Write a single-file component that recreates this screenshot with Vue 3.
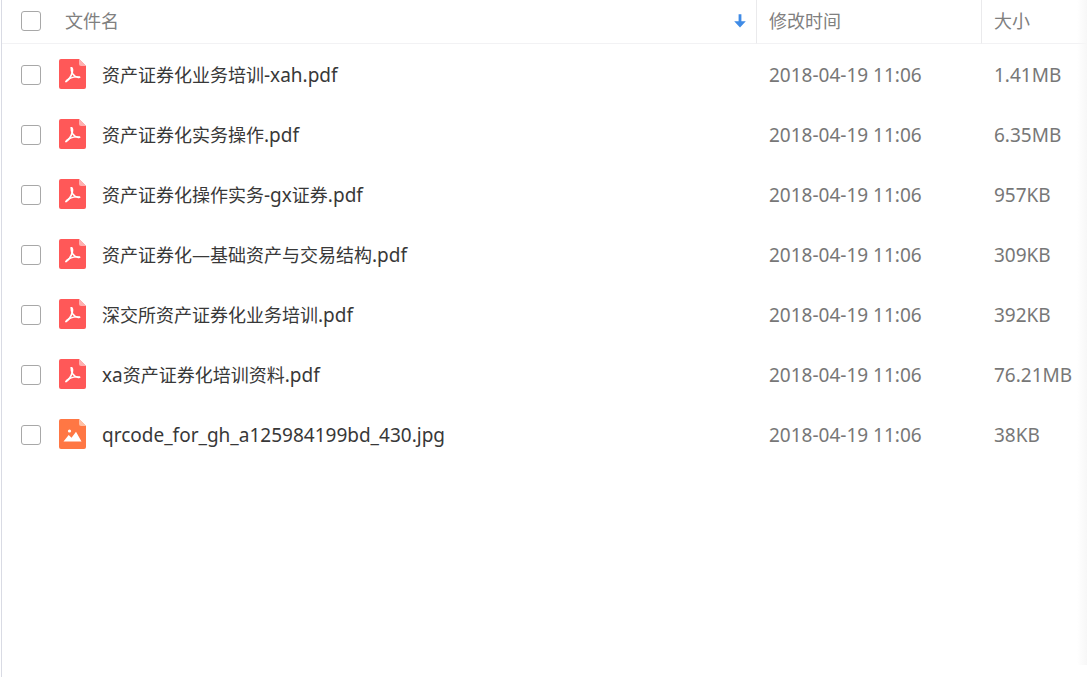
<script setup>
import { ref } from 'vue'

const modified = '2018-04-19 11:06'
const files = ref([
  { name: '资产证券化业务培训-xah.pdf', size: '1.41MB', type: 'pdf', checked: false },
  { name: '资产证券化实务操作.pdf', size: '6.35MB', type: 'pdf', checked: false },
  { name: '资产证券化操作实务-gx证券.pdf', size: '957KB', type: 'pdf', checked: false },
  { name: '资产证券化—基础资产与交易结构.pdf', size: '309KB', type: 'pdf', checked: false },
  { name: '深交所资产证券化业务培训.pdf', size: '392KB', type: 'pdf', checked: false },
  { name: 'xa资产证券化培训资料.pdf', size: '76.21MB', type: 'pdf', checked: false },
  { name: 'qrcode_for_gh_a125984199bd_430.jpg', size: '38KB', type: 'image', checked: false },
])

function toggleAll(event) {
  files.value.forEach((file) => { file.checked = event.target.checked })
}

// Splits a name into Latin and Chinese runs, which are set at different sizes.
function runs(name) {
  return name.match(/[\x20-\x7e]+|[^\x20-\x7e]+/g).map((text) => ({
    text,
    latin: /^[\x20-\x7e]/.test(text),
  }))
}
</script>

<template>
  <main class="panel">
    <table class="files">
      <colgroup>
        <col>
        <col class="col-time">
        <col class="col-size">
      </colgroup>
      <thead>
        <tr>
          <th scope="col">
            <div class="head-name">
              <input id="all" class="box" type="checkbox" aria-label="全选" @change="toggleAll">
              <span class="head-label">文件名</span>
              <svg class="arrow" width="12" height="14" viewBox="0 0 12 14" aria-hidden="true">
                <path d="M4.6 0.3h2.8v6.9H11.8L6 13.6 0.2 7.2H4.6z" fill="#3f8be6" />
              </svg>
            </div>
          </th>
          <th scope="col">修改时间</th>
          <th scope="col">大小</th>
        </tr>
      </thead>
      <tbody>
        <tr v-for="(file, i) in files" :key="file.name">
          <td>
            <div class="file">
              <input :id="'file-' + i" v-model="file.checked" class="box" type="checkbox">
              <svg class="icon" width="27" height="30" viewBox="0 0 27 30" aria-hidden="true">
                <path
                  d="M2 0H20L27 7V28a2 2 0 0 1-2 2H2a2 2 0 0 1-2-2V2a2 2 0 0 1 2-2z"
                  :fill="file.type === 'pdf' ? '#ff5858' : '#ff7744'"
                />
                <path d="M20 0L27 7H22a2 2 0 0 1-2-2z" :fill="file.type === 'pdf' ? '#ffb0b0' : '#ffc0a5'" />
                <g
                  v-if="file.type === 'pdf'" fill="none" stroke="#fff" stroke-width="1.6"
                  stroke-linecap="round" stroke-linejoin="round"
                >
                  <path d="M12.3 8.8C13.9 8.8 13.7 11.6 13.1 13.8C12.1 17.3 9.6 21 7 22.6" />
                  <path d="M12.3 8.8C12 11 12.7 13.4 14 15.2C15.6 17.3 18 18.9 20.6 18.2" />
                  <path d="M7 22.6C7 20.4 14.6 17 20.6 18.2" stroke-width="1.3" />
                </g>
                <g v-else fill="#fff">
                  <circle cx="10.5" cy="12" r="1.6" />
                  <path d="M4.5 22.4L9.7 16.1 12.5 18.7 17 12.7 22.5 22.4z" />
                </g>
              </svg>
              <label :for="'file-' + i" class="name"><span
                v-for="(run, r) in runs(file.name)" :key="r" :class="{ latin: run.latin }"
              >{{ run.text }}</span></label>
            </div>
          </td>
          <td>{{ modified }}</td>
          <td>{{ file.size }}</td>
        </tr>
      </tbody>
    </table>
  </main>
</template>

<style>
body {
  margin: 0;
  background: #fff;
}
</style>

<style scoped>
.panel {
  position: relative;
  box-sizing: border-box;
  min-height: 100vh;
  padding-left: 1px;
  font-family: "Noto Sans", "Noto Sans CJK SC", sans-serif;
}

.panel::before {
  content: "";
  position: absolute;
  top: 0;
  bottom: 0;
  left: 1px;
  width: 1px;
  background: #d9dbe4;
}

.panel::after {
  content: "";
  position: absolute;
  top: 0;
  right: 0;
  bottom: 12px;
  width: 10px;
  background: linear-gradient(to right, #fff0, #f7f7f7);
  pointer-events: none;
}

.files {
  width: 100%;
  table-layout: fixed;
  border-collapse: separate;
  border-spacing: 0;
}

.col-time {
  width: 225px;
}

.col-size {
  width: 106px;
}

th,
td {
  box-sizing: border-box;
  padding: 0 0 0 12px;
  text-align: left;
  font-weight: 400;
  white-space: nowrap;
}

th {
  height: 44px;
  padding-bottom: 2px;
  border-bottom: 1px solid #f2f2f4;
  border-left: 1px solid #eaeaec;
  color: #808080;
  font-size: 18px;
  line-height: 24px;
}

td {
  height: 60px;
  border-left: 1px solid transparent;
  color: #777;
  font-size: 19px;
  line-height: 26px;
}

tbody::before {
  content: "";
  display: block;
  height: 1px;
}

th:first-child,
td:first-child {
  border-left: 0;
  padding-left: 20px;
}

.head-name,
.file {
  display: flex;
  align-items: center;
}

.box {
  appearance: none;
  box-sizing: border-box;
  flex: none;
  width: 20px;
  height: 20px;
  margin: 0;
  border: 1px solid #a8a8a8;
  border-radius: 3px;
  background: #fff;
}

.box:checked {
  border-color: #3f8be6;
  background: #3f8be6;
}

.head-label {
  margin-left: 24px;
}

.arrow {
  margin-left: auto;
  margin-right: 10px;
}

.icon {
  flex: none;
  margin-bottom: 2px;
  margin-left: 18px;
}

.name {
  margin-left: 16px;
  color: #383838;
  font-size: 18px;
}

.latin {
  font-size: 19px;
}
</style>
